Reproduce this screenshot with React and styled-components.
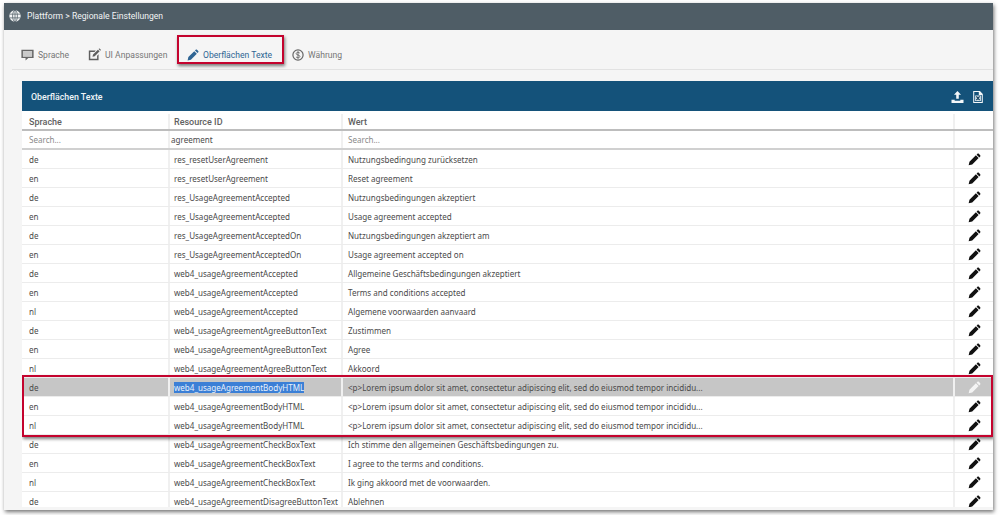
import React from 'react';
import styled, { createGlobalStyle } from 'styled-components';

const GlobalStyle = createGlobalStyle`
  html, body {
    margin: 0;
    padding: 0;
    background: #fff;
    font-family: Roboto, "Liberation Sans", sans-serif;
  }
`;

const Page = styled.div`
  width: 1000px;
  height: 515px;
  padding: 3px 7px 5px 4px;
  box-sizing: border-box;
  overflow: hidden;
`;

const Frame = styled.div`
  height: 507px;
  display: flex;
  flex-direction: column;
  background: #f5f5f5;
  box-shadow: 1px 2px 4px rgba(0, 0, 0, 0.55);
  overflow: hidden;
`;

const TopBar = styled.header`
  height: 27px;
  flex: none;
  box-sizing: border-box;
  display: flex;
  align-items: center;
  gap: 6px;
  padding: 0 0 2px 5px;
  background: #4f5d66;
  color: #f2f4f5;
  font-size: 8.6px;
`;

const Content = styled.div`
  flex: 1;
  min-height: 0;
  display: flex;
  flex-direction: column;
  padding: 10px 0 3px 8px;
`;

const Tabs = styled.nav`
  height: 29px;
  flex: none;
  display: flex;
  align-items: center;
  padding-left: 9px;
  border-bottom: 1px solid #e2e2e2;
  margin-bottom: 11px;
`;

const Tab = styled.div`
  position: relative;
  width: ${(p) => p.$width}px;
  display: flex;
  align-items: center;
  gap: 4px;
  font-size: 8.6px;
  color: ${(p) => (p.$active ? '#2f6594' : '#767676')};
`;

const TabMark = styled.div`
  position: absolute;
  left: -10px;
  top: -14px;
  width: 107px;
  height: 29px;
  box-sizing: border-box;
  border: 2px solid #c4032e;
  box-shadow: 1px 2px 3px rgba(0, 0, 0, 0.5);
`;

const Panel = styled.section`
  position: relative;
  margin-left: 10px;
  flex: 1;
  min-height: 0;
  display: flex;
  flex-direction: column;
  background: #fff;
  overflow: hidden;
`;

const PanelHead = styled.div`
  height: 30px;
  flex: none;
  box-sizing: border-box;
  display: flex;
  align-items: center;
  justify-content: space-between;
  padding: 1px 9px 0;
  background: #14527a;
  color: #f0f5f8;
  font-size: 8.8px;
  font-weight: 500;
`;

const PanelIcons = styled.div`
  display: flex;
  align-items: center;
  gap: 8px;
`;

const Row = styled.div`
  display: grid;
  grid-template-columns: 148px 173px 612px 1fr;
  height: ${(p) => p.$height || 19}px;
  flex: none;
  box-sizing: border-box;
  padding-top: ${(p) => p.$top || 0}px;
  border-bottom: ${(p) => p.$rule || '1px solid #ececec'};
  background: ${(p) => (p.$selected ? '#c6c6c6' : '#fff')};
`;

const Cell = styled.div`
  display: flex;
  align-items: center;
  padding-left: ${(p) => p.$pad ?? 5}px;
  font-family: ${(p) => (p.$head ? 'Roboto' : '"Noto Sans"')}, "Liberation Sans", sans-serif;
  font-size: ${(p) => (p.$head ? 9 : 8.05)}px;
  font-weight: ${(p) => (p.$head ? 500 : 400)};
  color: ${(p) => (p.$head ? '#616161' : p.$muted ? '#8a8a8a' : '#4a4a4a')};
  white-space: nowrap;
  overflow: hidden;
  border-right: 2px solid #f0f0f0;

  &:first-child {
    padding-left: 7px;
  }

  &:last-child {
    border-right: 0;
    justify-content: center;
    padding: 0 0 0 1px;
  }
`;

const Selection = styled.span`
  background: #3b7fd6;
  color: #e8f1fb;
`;

const RowMark = styled.div`
  position: absolute;
  left: 0;
  top: 294px;
  width: 971px;
  height: 62px;
  box-sizing: border-box;
  border: 2px solid #c4032e;
  box-shadow: 1px 2px 3px rgba(0, 0, 0, 0.5);
`;

const lorem = '<p>Lorem ipsum dolor sit amet, consectetur adipiscing elit, sed do eiusmod tempor incididu...';

const rows = [
  ['de', 'res_resetUserAgreement', 'Nutzungsbedingung zurücksetzen'],
  ['en', 'res_resetUserAgreement', 'Reset agreement'],
  ['de', 'res_UsageAgreementAccepted', 'Nutzungsbedingungen akzeptiert'],
  ['en', 'res_UsageAgreementAccepted', 'Usage agreement accepted'],
  ['de', 'res_UsageAgreementAcceptedOn', 'Nutzungsbedingungen akzeptiert am'],
  ['en', 'res_UsageAgreementAcceptedOn', 'Usage agreement accepted on'],
  ['de', 'web4_usageAgreementAccepted', 'Allgemeine Geschäftsbedingungen akzeptiert'],
  ['en', 'web4_usageAgreementAccepted', 'Terms and conditions accepted'],
  ['nl', 'web4_usageAgreementAccepted', 'Algemene voorwaarden aanvaard'],
  ['de', 'web4_usageAgreementAgreeButtonText', 'Zustimmen'],
  ['en', 'web4_usageAgreementAgreeButtonText', 'Agree'],
  ['nl', 'web4_usageAgreementAgreeButtonText', 'Akkoord'],
  ['de', 'web4_usageAgreementBodyHTML', lorem, true],
  ['en', 'web4_usageAgreementBodyHTML', lorem],
  ['nl', 'web4_usageAgreementBodyHTML', lorem],
  ['de', 'web4_usageAgreementCheckBoxText', 'Ich stimme den allgemeinen Geschäftsbedingungen zu.'],
  ['en', 'web4_usageAgreementCheckBoxText', 'I agree to the terms and conditions.'],
  ['nl', 'web4_usageAgreementCheckBoxText', 'Ik ging akkoord met de voorwaarden.'],
  ['de', 'web4_usageAgreementDisagreeButtonText', 'Ablehnen'],
];

const Pencil = ({ color = '#111', size = 13 }) => (
  <svg width={size} height={size} viewBox="0 0 16 16" fill={color}>
    <path d="M.8 15.2l1-4.4 7.9-7.9 3.4 3.4-7.9 7.9zM10.6 2l1-1c.5-.5 1.2-.5 1.7 0l1.7 1.7c.5.5.5 1.2 0 1.7l-1 1z" />
  </svg>
);

const GlobeIcon = () => (
  <svg width="12" height="12" viewBox="0 0 16 16" fill="none">
    <circle cx="8" cy="8" r="7.6" fill="#f4f6f7" />
    <g stroke="#4f5d66" strokeWidth="1">
      <ellipse cx="8" cy="8" rx="3.2" ry="7.6" />
      <path d="M8 .4v15.2M.8 5.5h14.4M.8 10.5h14.4" />
    </g>
  </svg>
);

const SpeechIcon = () => (
  <svg width="13" height="13" viewBox="0 0 16 16" fill="#666">
    <path fillRule="evenodd" d="M.5 2h15v10.4H9l-3.4 3v-3H.5zM2.4 3.8v6.8h11.2V3.8z" />
    <path fill="#c9c9c9" d="M2.4 3.8h11.2v6.8H2.4z" />
  </svg>
);

const EditIcon = () => (
  <svg width="13" height="13" viewBox="0 0 16 16" fill="#5f5f5f">
    <path fillRule="evenodd" d="M1 3h8.5L8 4.8H2.8v8.4h8.4V9.4L13 7.6V15H1z" />
    <path d="M5.5 10.8l.7-2.8 6-6 2.1 2.1-6 6zM13 1.3l.5-.5c.3-.3.7-.3 1 0l1.1 1.1c.3.3.3.7 0 1l-.5.5z" />
  </svg>
);

const DollarIcon = () => (
  <svg width="12" height="12" viewBox="0 0 16 16" fill="none">
    <circle cx="8" cy="8" r="6.8" stroke="#666" strokeWidth="1.6" />
    <path d="M10.4 5.6C10 4.7 9 4.4 8 4.4c-1.3 0-2.4.6-2.4 1.8 0 2.5 4.9 1.2 4.9 3.7 0 1.2-1.2 1.8-2.5 1.8-1.1 0-2.1-.4-2.6-1.3M8 3v10" stroke="#666" strokeWidth="1.2" />
  </svg>
);

const UploadIcon = () => (
  <svg width="13" height="12" viewBox="0 0 16 15" fill="#f4f7f9">
    <path d="M8 0l4.4 4.6H9.6v5H6.4v-5H3.6zM.5 10.8h4v1.4h7v-1.4h4V15H.5z" />
  </svg>
);

const ExcelIcon = () => (
  <svg width="12" height="12" viewBox="0 0 14 15">
    <path fill="#f4f7f9" fillRule="evenodd" d="M1 0h8.4L13 3.6V15H1zM2.3 1.3v12.4h9.4V5H8V1.3z" />
    <path fill="#dfe8ee" d="M3.4 5.6h7.2v7H3.4z" />
    <path stroke="#14405e" strokeWidth="1.6" d="M5 6.8l4 4.6M9 6.8l-4 4.6" />
  </svg>
);

const App = () => (
  <>
    <GlobalStyle />
    <Page>
      <Frame>
        <TopBar>
          <GlobeIcon />
          Plattform &gt; Regionale Einstellungen
        </TopBar>
        <Content>
          <Tabs>
            <Tab $width={67}><SpeechIcon />Sprache</Tab>
            <Tab $width={99}><EditIcon />UI Anpassungen</Tab>
            <Tab $width={105} $active>
              <Pencil color="#2f6594" size={12} />
              Oberflächen Texte
              <TabMark />
            </Tab>
            <Tab $width={70}><DollarIcon />Währung</Tab>
          </Tabs>
          <Panel>
            <PanelHead>
              Oberflächen Texte
              <PanelIcons>
                <UploadIcon />
                <ExcelIcon />
              </PanelIcons>
            </PanelHead>
            <Row $height={20} $top={3} $rule="2px solid #bdbdbd">
              <Cell $head>Sprache</Cell>
              <Cell $head $pad={4}>Resource ID</Cell>
              <Cell $head>Wert</Cell>
              <Cell />
            </Row>
            <Row $rule="2px solid #d0d0d0">
              <Cell $muted>Search...</Cell>
              <Cell $pad={1}>agreement</Cell>
              <Cell $muted>Search...</Cell>
              <Cell />
            </Row>
            {rows.map(([lang, id, value, selected], i) => (
              <Row key={i} $selected={selected}>
                <Cell>{lang}</Cell>
                <Cell $pad={4}>{selected ? <Selection>{id}</Selection> : id}</Cell>
                <Cell>{value}</Cell>
                <Cell><Pencil color={selected ? '#f4f4f4' : '#111'} /></Cell>
              </Row>
            ))}
            <RowMark />
          </Panel>
        </Content>
      </Frame>
    </Page>
  </>
);

export default App;
